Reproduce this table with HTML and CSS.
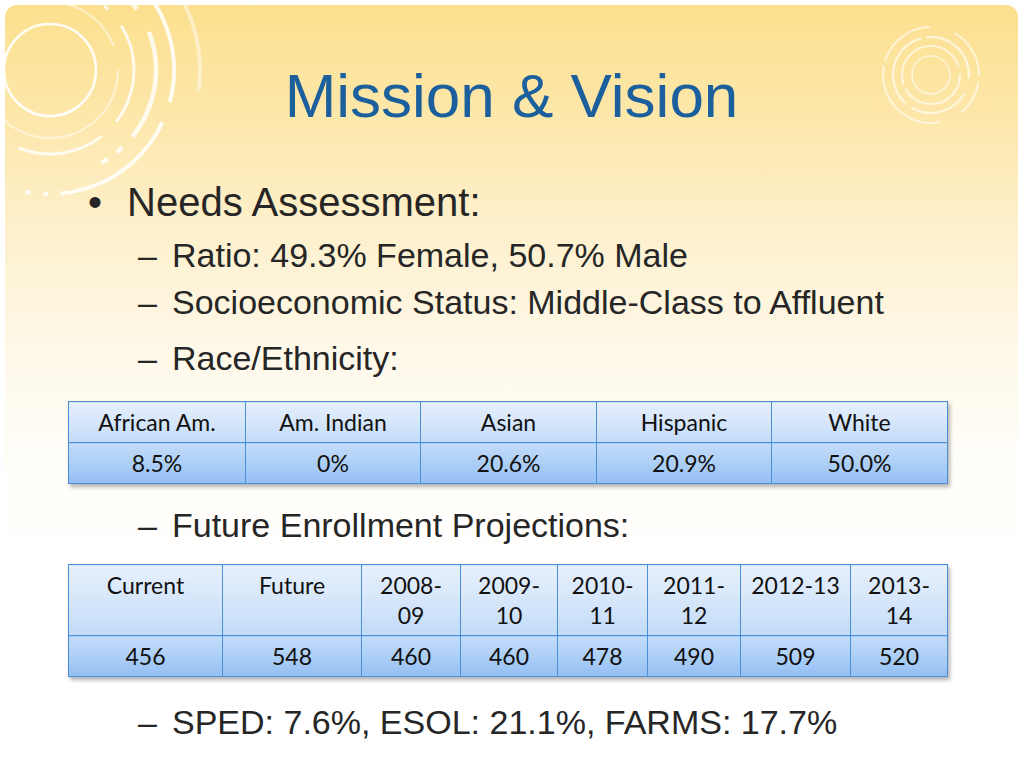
FILE: index.html
```html
<!DOCTYPE html>
<html lang="en">
<head>
<meta charset="utf-8">
<title>Mission &amp; Vision</title>
<link rel="stylesheet" href="styles.css">
</head>
<body>
<div class="slide">
  <svg class="decor decor-left" width="220" height="220" viewBox="0 0 220 220" aria-hidden="true">
    <g fill="none" stroke="#ffffff" stroke-linecap="butt">
      <circle cx="45" cy="65" r="46" stroke-width="2.6" opacity="0.9"/>
      <circle cx="45" cy="65" r="68" stroke-width="2" opacity="0.5" pathLength="360" stroke-dasharray="60 20 150 130" transform="rotate(-80 45 65)"/>
      <circle cx="45" cy="65" r="84" stroke-width="3" opacity="0.8" pathLength="360" stroke-dasharray="4 6 4 14 70 14 60 188" transform="rotate(-60 45 65)"/>
      <circle cx="45" cy="65" r="106" stroke-width="4.5" opacity="0.8" pathLength="360" stroke-dasharray="40 14 60 8 4 6 4 224" transform="rotate(-75 45 65)"/>
      <circle cx="45" cy="65" r="124" stroke-width="4" opacity="0.85" pathLength="360" stroke-dasharray="70 10 60 6 2 6 2 204" transform="rotate(-55 45 65)"/>
      <circle cx="45" cy="65" r="150" stroke-width="4" opacity="0.45" pathLength="360" stroke-dasharray="100 260" transform="rotate(-92 45 65)"/>
    </g>
  </svg>
  <svg class="decor decor-right" width="120" height="120" viewBox="0 0 120 120" aria-hidden="true">
    <g fill="none" stroke="#ffffff" stroke-linecap="round" opacity="0.6">
      <circle cx="60" cy="60" r="19" stroke-width="1.6"/>
      <circle cx="60" cy="60" r="29" stroke-width="2.2" pathLength="360" stroke-dasharray="150 12 180 18"/>
      <circle cx="60" cy="60" r="38" stroke-width="2.4" pathLength="360" stroke-dasharray="90 14 120 10 100 26" transform="rotate(30 60 60)"/>
      <circle cx="60" cy="60" r="48" stroke-width="2" pathLength="360" stroke-dasharray="60 10 40 30 110 8 70 32" transform="rotate(-60 60 60)"/>
    </g>
  </svg>

  <h1 class="title">Mission &amp; Vision</h1>

  <div class="content">
    <div class="item lvl1"><span class="marker">•</span><span>Needs Assessment:</span></div>
    <div class="item lvl2 first"><span class="marker">–</span><span>Ratio: 49.3% Female, 50.7% Male</span></div>
    <div class="item lvl2"><span class="marker">–</span><span>Socioeconomic Status: Middle-Class to Affluent</span></div>
    <div class="item lvl2 spaced"><span class="marker">–</span><span>Race/Ethnicity:</span></div>

    <table class="grid grid-race">
      <colgroup>
        <col class="w177"><col class="w175"><col class="w176"><col class="w175"><col class="w176">
      </colgroup>
      <tr class="head">
        <td>African Am.</td><td>Am. Indian</td><td>Asian</td><td>Hispanic</td><td>White</td>
      </tr>
      <tr class="data">
        <td>8.5%</td><td>0%</td><td>20.6%</td><td>20.9%</td><td>50.0%</td>
      </tr>
    </table>

    <div class="item lvl2 after-table"><span class="marker">–</span><span>Future Enrollment Projections:</span></div>

    <table class="grid grid-enroll">
      <colgroup>
        <col class="w154"><col class="w139"><col class="w99"><col class="w97"><col class="w90"><col class="w93"><col class="w110"><col class="w97">
      </colgroup>
      <tr class="head tall">
        <td>Current</td><td>Future</td><td>2008-<br>09</td><td>2009-<br>10</td><td>2010-<br>11</td><td>2011-<br>12</td><td>2012-13</td><td>2013-<br>14</td>
      </tr>
      <tr class="data">
        <td>456</td><td>548</td><td>460</td><td>460</td><td>478</td><td>490</td><td>509</td><td>520</td>
      </tr>
    </table>

    <div class="item lvl2 last"><span class="marker">–</span><span>SPED: 7.6%, ESOL: 21.1%, FARMS: 17.7%</span></div>
  </div>
</div>
</body>
</html>
```

FILE: styles.css
```css
html, body {
  margin: 0;
  padding: 0;
  background: #ffffff;
}

body {
  width: 1024px;
  height: 768px;
  overflow: hidden;
  font-family: "Liberation Sans", Arial, sans-serif;
}

.slide {
  position: relative;
  margin: 5px 6px 5px 5px;
  height: 758px;
  border-radius: 12px;
  overflow: hidden;
  background: linear-gradient(to bottom,
    #fce08f 0%,
    #fde7a9 14%,
    #fdf0cd 30%,
    #fef8e8 45%,
    #fffdf7 58%,
    #ffffff 75%);
}

.decor {
  position: absolute;
  pointer-events: none;
}

.decor-left {
  left: 0;
  top: 0;
}

.decor-right {
  left: 866px;
  top: 10px;
}

.title {
  position: relative;
  margin: 0;
  padding-top: 54px;
  text-align: center;
  font-family: "Liberation Sans", Arial, sans-serif;
  font-weight: normal;
  font-size: 62px;
  line-height: 74px;
  color: #1b5f9c;
}

.content {
  position: relative;
  color: #262626;
}

.item {
  display: flex;
  white-space: nowrap;
}

.lvl1 {
  margin-top: 45px;
  padding-left: 83px;
  font-size: 40px;
  line-height: 48px;
}

.lvl1 .marker {
  width: 39px;
  flex: none;
}

.lvl2 {
  padding-left: 133px;
  font-size: 34px;
  line-height: 46px;
  margin-top: 1px;
}

.lvl2 .marker {
  width: 34px;
  flex: none;
}

.lvl2.first {
  margin-top: 6px;
}

.lvl2.spaced {
  margin-top: 10px;
}

.lvl2.after-table {
  margin-top: 18px;
}

.lvl2.last {
  margin-top: 22px;
}

.grid {
  margin-left: 63px;
  width: 879px;
  border-collapse: collapse;
  table-layout: fixed;
  font-family: Lato, "Open Sans", sans-serif;
  font-size: 23px;
  color: #111111;
  box-shadow: 2px 3px 4px rgba(0, 0, 0, 0.3);
  text-align: center;
}

.grid-race {
  margin-top: 20px;
}

.grid-enroll {
  margin-top: 16px;
}

.grid td {
  border: 1px solid #4a8fd8;
  padding: 0 6px;
  white-space: nowrap;
  vertical-align: middle;
}

.grid .head td {
  height: 40px;
  background: linear-gradient(to bottom, #e6f0fc 0%, #d4e5fa 55%, #c2dbf8 100%);
}

.grid .data td {
  height: 40px;
  background: linear-gradient(to bottom, #c3dcf9 0%, #aacdf6 55%, #94bff3 100%);
}

.grid .head.tall td {
  height: 71px;
  vertical-align: top;
  line-height: 30px;
  padding-top: 5px;
  padding-bottom: 0;
  box-sizing: border-box;
}

.w177 { width: 177px; }
.w175 { width: 175px; }
.w176 { width: 176px; }
.w154 { width: 154px; }
.w139 { width: 139px; }
.w99 { width: 99px; }
.w97 { width: 97px; }
.w90 { width: 90px; }
.w93 { width: 93px; }
.w110 { width: 110px; }
```
